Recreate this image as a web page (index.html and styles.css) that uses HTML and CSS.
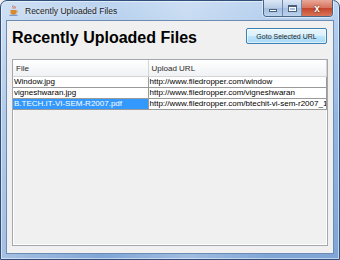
FILE: index.html
```html
<!DOCTYPE html>
<html lang="en">
<head>
    <meta charset="UTF-8">
    <title>Recently Uploaded Files</title>
    <link rel="stylesheet" href="styles.css">
</head>
<body>
    <!-- window frame -->
    <div class="window">
        <div class="titlebar">
            <svg class="app-icon" width="10" height="11" viewBox="0 0 10 11">
                <path d="M4 0.5c-1 1.2 1 1.8 0 3.2M6 1c-0.8 1 0.8 1.5 0 2.6" stroke="#d04a2a" stroke-width="0.9" fill="none"/>
                <path d="M1.5 5h6v2.6c0 1.4-1.2 2.2-3 2.2s-3-0.8-3-2.2z" fill="#d88a2c"/>
                <path d="M7.5 5.6c1.4 0 1.4 1.8 0 1.8" stroke="#d88a2c" stroke-width="0.8" fill="none"/>
                <path d="M0.5 10.3h8" stroke="#5a7fb8" stroke-width="0.9"/>
            </svg>
            <span class="win-title">Recently Uploaded Files</span>
            <div class="caption-btns">
                <span class="cbtn min"><i></i></span>
                <span class="cbtn max"><i></i></span>
                <span class="cbtn close">x</span>
            </div>
        </div>

        <!-- client area -->
        <div class="client">
            <div class="top-row">
                <h1 class="page-title">Recently Uploaded Files</h1>
                <button class="goto-btn">Goto Selected URL</button>
            </div>
            <div class="scroll-pane">
                <table class="files">
                    <colgroup>
                        <col class="col-file">
                        <col>
                    </colgroup>
                    <thead>
                        <tr><th>File</th><th>Upload URL</th></tr>
                    </thead>
                    <tbody>
                        <tr><td>Window.jpg</td><td>http://www.filedropper.com/window</td></tr>
                        <tr><td>vigneshwaran.jpg</td><td>http://www.filedropper.com/vigneshwaran</td></tr>
                        <tr class="selected"><td>B.TECH.IT-VI-SEM-R2007.pdf</td><td>http://www.filedropper.com/btechit-vi-sem-r2007_1</td></tr>
                    </tbody>
                </table>
            </div>
        </div>
    </div>
</body>
</html>
```

FILE: styles.css
```css
/* base */
* {
    margin: 0;
    padding: 0;
    box-sizing: border-box;
}

body {
    width: 340px;
    height: 260px;
    background: #f0f0f0;
    font-family: 'Liberation Sans', Arial, sans-serif;
    overflow: hidden;
}

/* window frame */
.window {
    width: 340px;
    height: 260px;
    display: flex;
    flex-direction: column;
    border: 1px solid #2f4f7a;
    border-radius: 7px 7px 0 0;
    padding: 0 5px 5px;
    background:
        linear-gradient(90deg, rgba(255,255,255,0.3), rgba(255,255,255,0) 30%, rgba(255,255,255,0.25) 55%, rgba(255,255,255,0) 80%),
        linear-gradient(180deg, #bcd4f0, #93b6e0 45%, #7fa5d6);
    box-shadow: inset 0 0 0 1px rgba(255,255,255,0.5);
}

.titlebar {
    height: 19px;
    display: flex;
    align-items: center;
    position: relative;
}

.app-icon {
    margin: 0 0 1px 3px;
}

.win-title {
    margin-left: 6px;
    font-size: 8.5px;
    color: #1a1a1a;
    text-shadow: 0 0 4px rgba(255,255,255,0.9);
}

/* min / max / close */
.caption-btns {
    position: absolute;
    top: -1px;
    right: 1px;
    display: flex;
    border: 1px solid #4a6488;
    border-top: none;
    border-radius: 0 0 4px 4px;
    overflow: hidden;
    box-shadow: 0 0 0 1px rgba(255,255,255,0.5);
}

.cbtn {
    height: 16px;
    display: flex;
    align-items: center;
    justify-content: center;
    background: linear-gradient(180deg, #dbe7f5, #b8cde8 50%, #a4bde0 51%, #bcd2ec);
    border-right: 1px solid #6f87a8;
}

.cbtn.min,
.cbtn.max {
    width: 19px;
}

.cbtn.min i {
    width: 8px;
    height: 3px;
    margin-top: 5px;
    background: #fff;
    border: 1px solid #4a5f7c;
}

.cbtn.max i {
    width: 9px;
    height: 7px;
    border: 1px solid #4a5f7c;
    border-top-width: 2px;
    box-shadow: inset 0 0 0 1px #fff;
}

.cbtn.close {
    width: 30px;
    border-right: none;
    background: linear-gradient(180deg, #e9a898, #d6725c 50%, #c2452b 51%, #db7458);
    color: #fff;
    font-size: 10px;
    font-weight: bold;
    text-shadow: 0 0 2px #4a1a10;
}

/* client area */
.client {
    flex: 1;
    display: flex;
    flex-direction: column;
    background: #f0f0f0;
    border: 1px solid #6d8cb5;
    padding: 7px 5px 7px 5px;
}

.top-row {
    display: flex;
    justify-content: space-between;
    align-items: flex-start;
    height: 31px;
}

.page-title {
    font-size: 16px;
    line-height: 20px;
    font-weight: bold;
    color: #000;
}

.goto-btn {
    width: 81px;
    height: 16px;
    margin-right: 1px;
    font-family: 'Liberation Sans', Arial, sans-serif;
    font-size: 7px;
    color: #1e1e1e;
    border: 1px solid #3c7fb1;
    border-radius: 2px;
    background: linear-gradient(180deg, #eaf6fd, #d9f0fc 50%, #bee6fd 51%, #a7d9f5);
    box-shadow: inset 0 0 0 1px rgba(255,255,255,0.6);
}

/* table */
.scroll-pane {
    flex: 1;
    border: 1px solid #a3a8ae;
    background: #f0f0f0;
    box-shadow: inset 0 0 0 1px #fff;
}

.files {
    width: 100%;
    border-collapse: collapse;
    table-layout: fixed;
    font-size: 8px;
}

.col-file {
    width: 135px;
}

.files th {
    height: 16px;
    text-align: left;
    font-weight: normal;
    color: #2a2a2a;
    padding: 2px 0 0 3px;
    background: linear-gradient(180deg, #ffffff, #f7f8fa 50%, #eff1f4);
    border-right: 1px solid #d5d5d5;
    border-bottom: 1px solid #d5d5d5;
}

.files td {
    height: 11px;
    line-height: 9px;
    padding: 0 1px;
    background: #fff;
    color: #000;
    border: 1px solid #9a9a9a;
    border-left: none;
    white-space: nowrap;
    overflow: hidden;
}

.files tr.selected td:first-child {
    background: #3399ff;
    color: #fff;
}
```
